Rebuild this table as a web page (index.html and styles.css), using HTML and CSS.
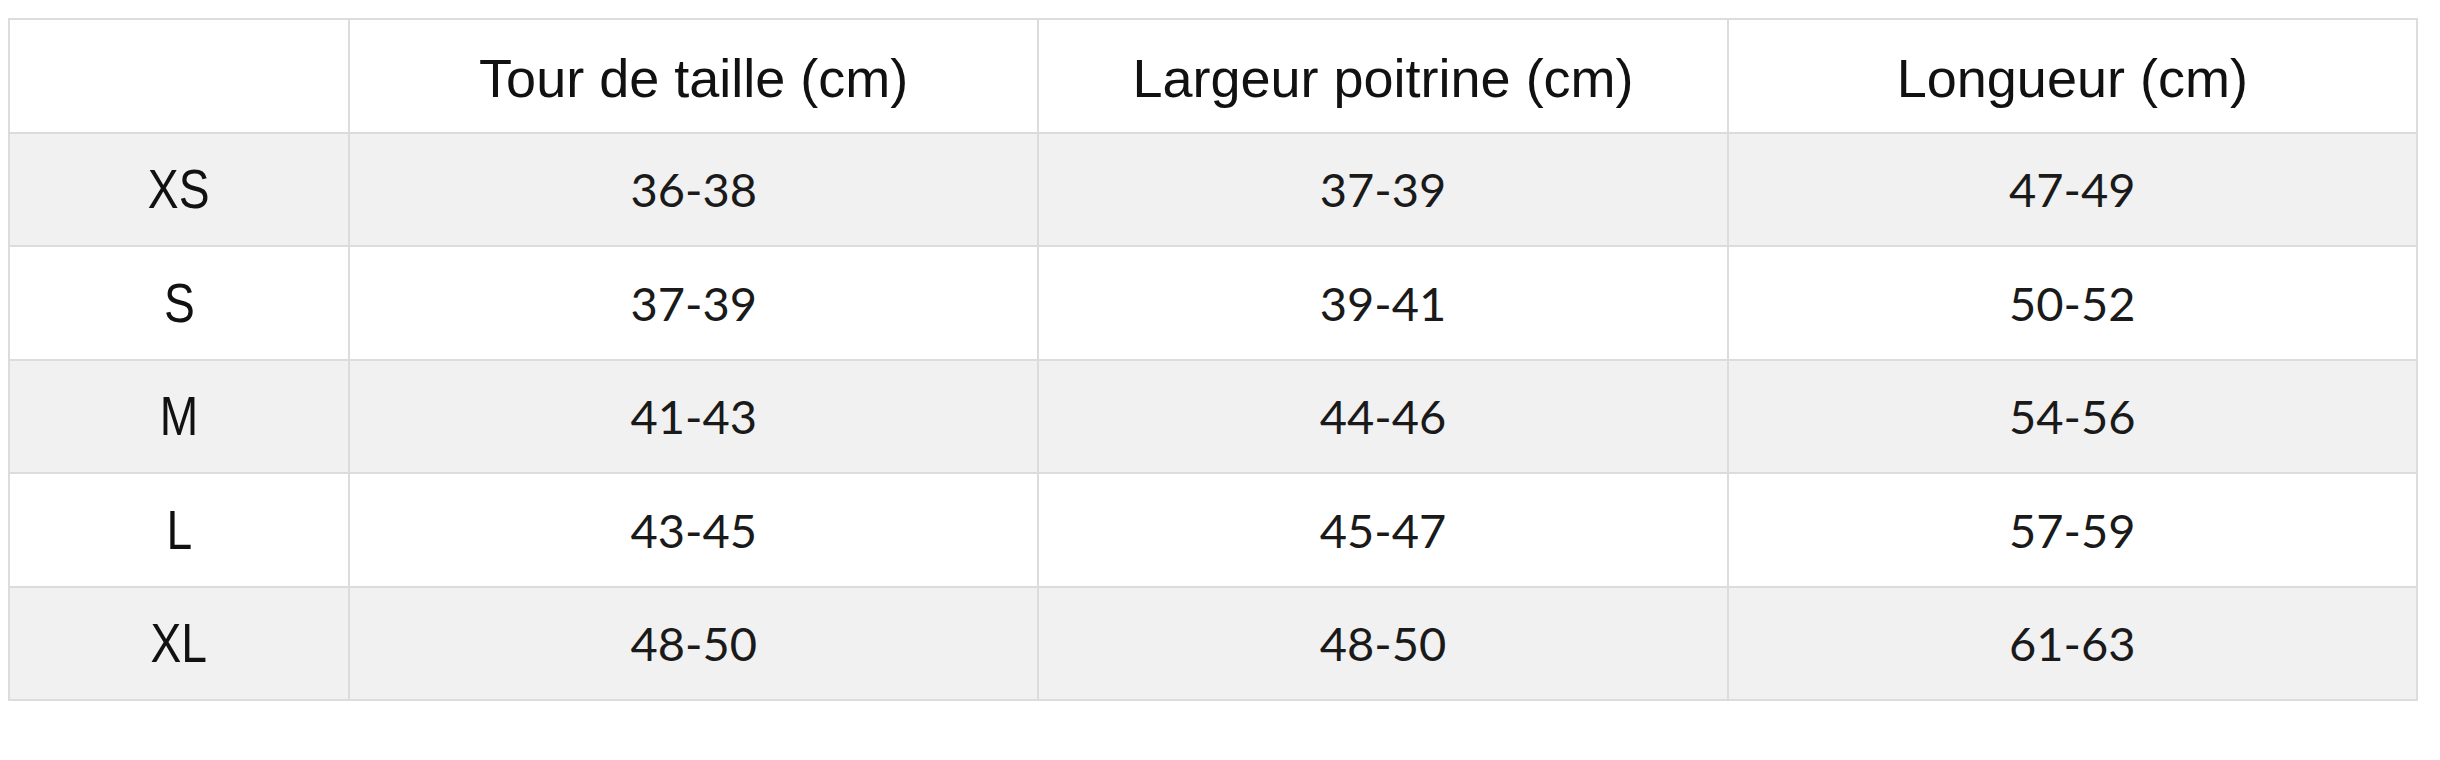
FILE: index.html
```html
<!DOCTYPE html>
<html lang="fr">
<head>
<meta charset="utf-8">
<title>Guide des tailles</title>
<link rel="stylesheet" href="styles.css">
</head>
<body>
<table class="sizes">
  <thead>
    <tr>
      <th class="size-col"></th>
      <th>Tour de taille (cm)</th>
      <th>Largeur poitrine (cm)</th>
      <th>Longueur (cm)</th>
    </tr>
  </thead>
  <tbody>
    <tr class="alt"><td class="size"><span class="label">XS</span></td><td>36-38</td><td>37-39</td><td>47-49</td></tr>
    <tr><td class="size"><span class="label">S</span></td><td>37-39</td><td>39-41</td><td>50-52</td></tr>
    <tr class="alt"><td class="size"><span class="label">M</span></td><td>41-43</td><td>44-46</td><td>54-56</td></tr>
    <tr><td class="size"><span class="label">L</span></td><td>43-45</td><td>45-47</td><td>57-59</td></tr>
    <tr class="alt"><td class="size"><span class="label">XL</span></td><td>48-50</td><td>48-50</td><td>61-63</td></tr>
  </tbody>
</table>
</body>
</html>
```
FILE: styles.css
```css
html, body {
  margin: 0;
  padding: 0;
  background: #ffffff;
}

body {
  padding: 18px 0 0 8px;
  color: #111111;
}

.sizes {
  width: 2410px;
  table-layout: fixed;
  border-collapse: separate;
  border-spacing: 0;
  border-top: 2px solid #dcdcdc;
  border-left: 2px solid #dcdcdc;
}

.sizes th,
.sizes td {
  border-right: 2px solid #dcdcdc;
  border-bottom: 2px solid #dcdcdc;
  text-align: center;
  vertical-align: middle;
  padding: 0;
}

.sizes tr {
  height: 113.5px;
}

.sizes th {
  font-family: "Liberation Sans", Arial, sans-serif;
  font-weight: normal;
  font-size: 54px;
  background: #ffffff;
  padding-top: 4px;
}

.sizes th.size-col {
  width: 338px;
}

.sizes td {
  font-family: Lato, "Liberation Sans", sans-serif;
  font-weight: 400;
  font-size: 47px;
  color: #1a1a1a;
  background: #ffffff;
}

.sizes tr.alt td {
  background: #f1f1f1;
}

.sizes td.size {
  font-family: "Liberation Sans", Arial, sans-serif;
  font-weight: normal;
  font-size: 55px;
  color: #111111;
}

.label {
  display: inline-block;
  transform: scaleX(0.84);
}
```
